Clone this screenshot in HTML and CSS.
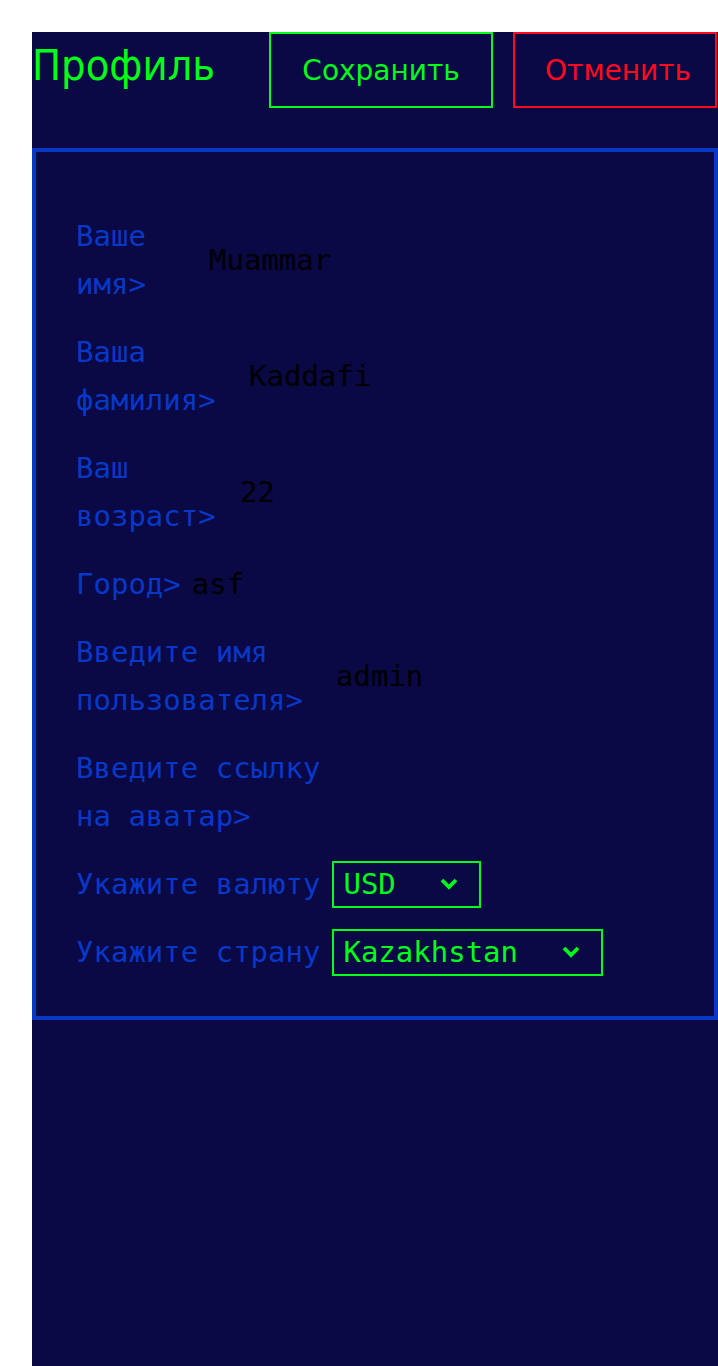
FILE: index.html
```html
<!DOCTYPE html>
<html lang="ru">
<head>
<meta charset="utf-8">
<title>Профиль</title>
<link rel="stylesheet" href="styles.css">
</head>
<body>
<main class="panel">
  <header class="header">
    <h1 class="title">Профиль</h1>
    <button class="btn btn-save" type="button">Сохранить</button>
    <button class="btn btn-cancel" type="button">Отменить</button>
  </header>
  <section class="card">
    <div class="row">
      <span class="label w-name">Ваше имя&gt;</span>
      <span class="value v-name">Muammar</span>
    </div>
    <div class="row">
      <span class="label w-surname">Ваша фамилия&gt;</span>
      <span class="value v-surname">Kaddafi</span>
    </div>
    <div class="row">
      <span class="label w-age">Ваш возраст&gt;</span>
      <span class="value v-age">22</span>
    </div>
    <div class="row">
      <span class="label">Город&gt;</span>
      <span class="value v-city">asf</span>
    </div>
    <div class="row">
      <span class="label w-user">Введите имя пользователя&gt;</span>
      <span class="value v-user">admin</span>
    </div>
    <div class="row">
      <span class="label w-avatar">Введите ссылку на аватар&gt;</span>
    </div>
    <div class="row">
      <span class="label">Укажите валюту</span>
      <div class="select">
        <span class="select-text">USD</span>
        <svg class="chevron" width="18" height="12" viewBox="0 0 18 12"><polyline points="2,2 9,9 16,2" fill="none" stroke="#00ff1a" stroke-width="3.8"/></svg>
      </div>
    </div>
    <div class="row">
      <span class="label">Укажите страну</span>
      <div class="select">
        <span class="select-text">Kazakhstan</span>
        <svg class="chevron" width="18" height="12" viewBox="0 0 18 12"><polyline points="2,2 9,9 16,2" fill="none" stroke="#00ff1a" stroke-width="3.8"/></svg>
      </div>
    </div>
  </section>
</main>
</body>
</html>
```

FILE: styles.css
```css
html, body {
  margin: 0;
  padding: 0;
  background: #ffffff;
}

body {
  overflow: hidden;
}

.panel {
  margin: 32px 0 0 32px;
  width: 686px;
  min-height: calc(100vh - 32px);
  background: #0a0845;
  box-sizing: border-box;
}

.header {
  display: flex;
  align-items: baseline;
  margin-bottom: 40px;
}

.title {
  margin: 0 54px 0 0;
  font-family: "DejaVu Sans", sans-serif;
  font-stretch: condensed;
  font-weight: normal;
  font-size: 43px;
  color: #00ff1a;
}

.btn {
  height: 76px;
  padding: 0 30px;
  background: transparent;
  font-family: "DejaVu Sans", sans-serif;
  font-size: 28px;
  cursor: pointer;
}

.btn-save {
  width: 224px;
  border: 2px solid #00ff1a;
  color: #00ff1a;
  margin-right: 20px;
}

.btn-cancel {
  width: 204px;
  border: 2px solid #ff0a1e;
  color: #ff0a1e;
}

.card {
  border: 4px solid #0838c8;
  padding: 60px 40px 40px 40px;
  display: flex;
  flex-direction: column;
  gap: 20px;
  font-family: "DejaVu Sans Mono", monospace;
  font-size: 29px;
  line-height: 48px;
}

.row {
  display: flex;
  align-items: center;
}

.label {
  color: #0838c8;
  flex: none;
}

.w-name { width: 118px; }
.w-surname { width: 158px; }
.w-age { width: 149px; }
.w-user { width: 245px; }
.w-avatar { width: 262px; }

.value {
  color: #000000;
}

.v-name { margin-left: 15px; }
.v-surname { margin-left: 15px; }
.v-age { margin-left: 15px; }
.v-city { margin-left: 11px; }
.v-user { margin-left: 15px; }

.select {
  margin-left: 12px;
  height: 47px;
  box-sizing: border-box;
  border: 2px solid #00ff1a;
  display: flex;
  align-items: center;
  gap: 44px;
  padding: 0 21px 0 9px;
  color: #00ff1a;
}

.select-text {
  line-height: 43px;
}

.chevron {
  display: block;
}
```
